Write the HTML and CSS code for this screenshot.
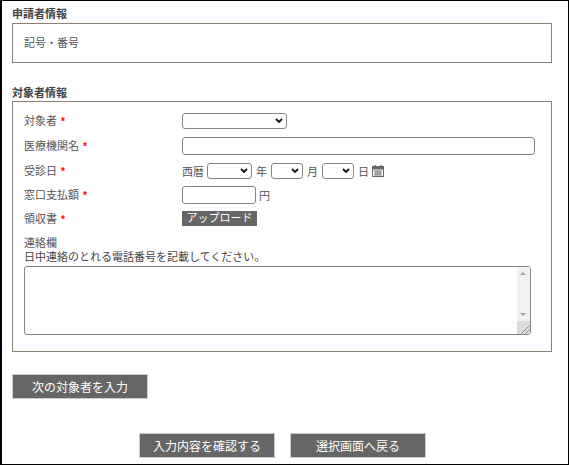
FILE: index.html
```html
<!DOCTYPE html>
<html lang="ja">
  <head>
    <meta charset="UTF-8" />
    <meta name="viewport" content="width=device-width, initial-scale=1.0" />
    <title>対象者情報の入力</title>
    <link rel="stylesheet" href="styles.css">
  </head>
  <body>
    <div class="container">
      <h2 class="section-title">申請者情報</h2>
      <div class="box applicant-box">
        <span class="label-text">記号・番号</span>
      </div>

      <h2 class="section-title target-title">対象者情報</h2>
      <div class="box target-box">
        <div class="row select-row">
          <label class="row-label">対象者 <span class="required">*</span></label>
          <select class="target-select"><option></option></select>
        </div>
        <div class="row name-row">
          <label class="row-label">医療機関名 <span class="required">*</span></label>
          <input type="text" class="text-input name-input" />
        </div>
        <div class="row date-row">
          <label class="row-label">受診日 <span class="required">*</span></label>
          <div class="date-group">
            <span class="era">西暦</span>
            <select class="year-select"><option></option></select>
            <span>年</span>
            <select class="short-select"><option></option></select>
            <span>月</span>
            <select class="short-select"><option></option></select>
            <span>日</span>
            <svg class="calendar-icon" width="12" height="12" viewBox="0 0 12 12">
              <rect x="0.5" y="1.5" width="11" height="10" fill="#fff" stroke="#666" />
              <rect x="1" y="2" width="10" height="2.5" fill="#666" />
              <path d="M3 0v3M9 0v3" stroke="#666" stroke-width="1.4" />
              <path d="M2 6h8M2 8h8M2 10h8M4 5.5v5M6 5.5v5M8 5.5v5" stroke="#777" stroke-width="0.9" />
            </svg>
          </div>
        </div>
        <div class="row money-row">
          <label class="row-label">窓口支払額 <span class="required">*</span></label>
          <input type="text" class="text-input money-input" />
          <span class="unit">円</span>
        </div>
        <div class="row upload-row">
          <label class="row-label">領収書 <span class="required">*</span></label>
          <button type="button" class="upload-button">アップロード</button>
        </div>
        <div class="contact">
          <div class="contact-title">連絡欄</div>
          <div class="contact-note">日中連絡のとれる電話番号を記載してください。</div>
          <div class="textarea-wrap">
            <textarea class="contact-text"></textarea>
            <!-- スクロールバーは空のtextareaでは出ないので重ねて描く -->
            <div class="fake-scrollbar">
              <span class="arrow-up"></span>
              <span class="arrow-down"></span>
              <span class="scroll-corner">
                <svg width="13" height="13" viewBox="0 0 13 13">
                  <path d="M12.5 4.5l-8 8M12.5 8.5l-4 4" stroke="#8a8a8a" stroke-width="1" fill="none" />
                </svg>
              </span>
            </div>
          </div>
        </div>
      </div>

      <button type="button" class="gray-button next-button">次の対象者を入力</button>
      <div class="footer-buttons">
        <button type="button" class="gray-button">入力内容を確認する</button>
        <button type="button" class="gray-button">選択画面へ戻る</button>
      </div>
    </div>
  </body>
</html>
```

FILE: styles.css
```css
html,
body {
  margin: 0;
  padding: 0;
  background-color: #fff;
}

.container {
  box-sizing: border-box;
  width: 569px;
  height: 465px;
  padding: 7px 16px 0 10px;
  border: 1px solid #000;
  border-left-width: 2px;
  font-family: "Liberation Sans", "Noto Sans CJK JP", sans-serif;
  font-size: 11px;
  color: #555;
  overflow: hidden;
}

.section-title {
  margin: 0;
  height: 15px;
  line-height: 13px;
  font-size: 11px;
  font-weight: bold;
  color: #444;
}

.target-title {
  margin-top: 23px;
  line-height: 15px;
}

.box {
  box-sizing: border-box;
  width: 540px;
  border: 1px solid #8c8274;
}

.applicant-box {
  display: flex;
  align-items: center;
  height: 40px;
  padding: 0 11px 2px;
}

.target-box {
  height: 251px;
  padding: 11px 11px 0;
}

.row {
  display: flex;
  align-items: center;
  height: 24px;
}

.select-row {
  height: 16px;
}

.name-row {
  margin-top: 5px;
}

.date-row {
  height: 25px;
}

.upload-row {
  height: 23px;
}

.row-label {
  flex: none;
  width: 158px;
  padding-bottom: 2px;
}

.required {
  margin-left: 1px;
  color: #f00;
  font-size: 10px;
  font-weight: bold;
}

select {
  box-sizing: border-box;
  height: 16px;
  padding: 0;
  appearance: none;
  background: #fff url("data:image/svg+xml,%3Csvg xmlns='http://www.w3.org/2000/svg' width='8' height='6'%3E%3Cpath d='M1 1l3 3 3-3' fill='none' stroke='%23111' stroke-width='1.8'/%3E%3C/svg%3E") no-repeat right 3px center;
  border: 1px solid #858585;
  border-radius: 3px;
  font-size: 10px;
}

.target-select {
  width: 105px;
}

.year-select {
  width: 45px;
}

.short-select {
  width: 32px;
}

.text-input {
  box-sizing: border-box;
  height: 18px;
  padding: 0 4px;
  border: 1px solid #858585;
  border-radius: 3px;
}

.name-input {
  width: 353px;
}

.money-input {
  width: 74px;
}

.date-group {
  display: flex;
  align-items: center;
  gap: 4px;
}

.era {
  margin-right: -1px;
}

.calendar-icon {
  margin-left: -1px;
}

.unit {
  margin-left: 3px;
}

.upload-button {
  width: 75px;
  height: 15px;
  padding: 0;
  border: none;
  background-color: #666;
  color: #fff;
  font-family: inherit;
  font-size: 11px;
  line-height: 15px;
}

.contact {
  margin-top: 6px;
}

.contact-title {
  height: 14px;
  line-height: 14px;
}

.contact-note {
  height: 15px;
  line-height: 15px;
  color: #444;
}

.textarea-wrap {
  position: relative;
  width: 507px;
  height: 69px;
  margin-top: 1px;
}

.contact-text {
  display: block;
  box-sizing: border-box;
  width: 100%;
  height: 100%;
  margin: 0;
  border: 1px solid #858585;
  border-radius: 3px;
  overflow: hidden;
  resize: none;
}

.fake-scrollbar {
  position: absolute;
  top: 1px;
  right: 1px;
  bottom: 1px;
  width: 13px;
  background-color: #f1f1f1;
  pointer-events: none;
}

.arrow-up,
.arrow-down {
  position: absolute;
  left: 3px;
  width: 0;
  height: 0;
  border-left: 3.5px solid transparent;
  border-right: 3.5px solid transparent;
}

.arrow-up {
  top: 5px;
  border-bottom: 3.5px solid #a3a3a3;
}

.arrow-down {
  bottom: 18px;
  border-top: 3.5px solid #a3a3a3;
}

.scroll-corner {
  position: absolute;
  left: 0;
  bottom: 0;
  width: 13px;
  height: 13px;
  background-color: #dcdcdc;
}

.scroll-corner svg {
  display: block;
}

.gray-button {
  box-sizing: border-box;
  width: 136px;
  height: 25px;
  padding: 0;
  border: 1px solid #ccc;
  background-color: #666;
  color: #fff;
  font-family: inherit;
  font-size: 12px;
}

.next-button {
  display: block;
  margin-top: 22px;
}

.footer-buttons {
  display: flex;
  gap: 15px;
  margin: 34px 0 0 127px;
}
```
